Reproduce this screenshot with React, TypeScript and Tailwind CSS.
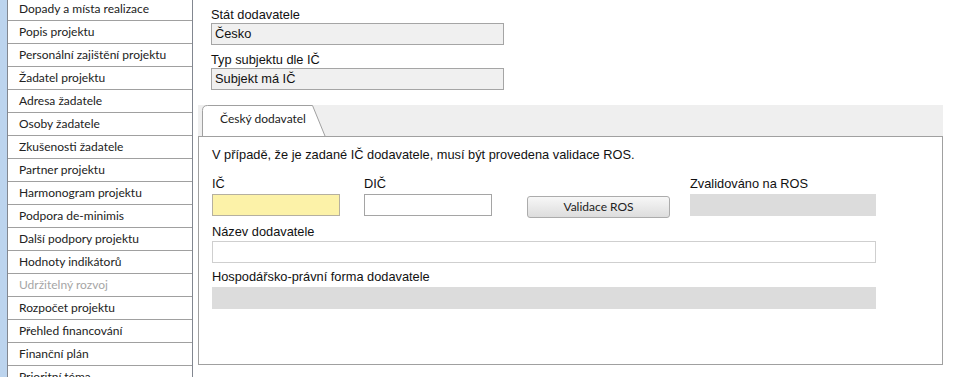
const NAV = [
  { label: 'Dopady a místa realizace' },
  { label: 'Popis projektu' },
  { label: 'Personální zajištění projektu' },
  { label: 'Žadatel projektu' },
  { label: 'Adresa žadatele' },
  { label: 'Osoby žadatele' },
  { label: 'Zkušenosti žadatele' },
  { label: 'Partner projektu' },
  { label: 'Harmonogram projektu' },
  { label: 'Podpora de-minimis' },
  { label: 'Další podpory projektu' },
  { label: 'Hodnoty indikátorů' },
  { label: 'Udržitelný rozvoj', disabled: true },
  { label: 'Rozpočet projektu' },
  { label: 'Přehled financování' },
  { label: 'Finanční plán' },
  { label: 'Prioritní téma' },
];

const uiFont = "font-['Lato','Noto_Sans',sans-serif]";
const formFont = "font-['Liberation_Sans',Arial,sans-serif]";

function Sidebar() {
  return (
    <div className="flex h-[377px] shrink-0 overflow-hidden">
      <div className="w-[7px] bg-[#bcd4ee]" />
      <div className="w-[186px] border-x border-[#828790] bg-white">
        <div className="-mt-[2px]">
          {NAV.map(item => (
            <div
              key={item.label}
              className={`h-[23px] border-b border-[#a0a0a0] pl-[11px] text-[12px] leading-[22px] ${uiFont} ${
                item.disabled ? 'text-[#a6a6a6]' : 'text-[#222]'
              }`}
            >
              {item.label}
            </div>
          ))}
        </div>
      </div>
    </div>
  );
}

function Label({ children }: { children: React.ReactNode }) {
  return <div className="h-[16px] text-[12.8px] leading-[16px] text-[#111]">{children}</div>;
}

function Tab({ title }: { title: string }) {
  return (
    <div className="relative ml-[4px] h-[31px] w-[124px]">
      <svg className="absolute inset-0" width="124" height="31" viewBox="0 0 124 31">
        <path d="M0.5 31 V5.5 Q0.5 0.5 5.5 0.5 H110.5 L123 31" fill="#fff" stroke="#a0a0a0" />
      </svg>
      <span className={`relative block pl-[18px] pt-[6px] text-[12px] leading-[16px] text-[#222] ${uiFont}`}>
        {title}
      </span>
    </div>
  );
}

export default function App() {
  return (
    <div className={`flex h-[377px] w-[962px] overflow-hidden bg-white ${formFont}`}>
      <Sidebar />
      <div className="ml-[5px] w-[745px]">
        {/* Header fields */}
        <div className="pl-[13px] pt-[7px]">
          <div className="h-[15px] text-[12.8px] leading-[15px] text-[#111]">Stát dodavatele</div>
          <div className="mt-[1px] h-[22px] w-[293px] border border-[#a5a5a5] bg-[#f0f0f0] pl-[3px] text-[12.8px] leading-[20px] text-[#111]">
            Česko
          </div>
          <div className="mt-[7px] h-[15px] text-[12.8px] leading-[15px] text-[#111]">Typ subjektu dle IČ</div>
          <div className="mt-[1px] h-[22px] w-[293px] border border-[#a5a5a5] bg-[#f0f0f0] pl-[3px] text-[12.8px] leading-[20px] text-[#111]">
            Subjekt má IČ
          </div>
        </div>

        {/* Tab strip */}
        <div className="mt-[15px] flex h-[31px] items-end bg-[#efefef]">
          <Tab title="Český dodavatel" />
        </div>

        {/* Tab panel */}
        <div className="h-[229px] border border-[#a0a0a0] pl-[13px]">
          <p className="pt-[10px] text-[12.8px] leading-[16px] text-[#111]">
            V případě, že je zadané IČ dodavatele, musí být provedena validace ROS.
          </p>

          <div className="mt-[13px] flex">
            <div className="w-[128px]">
              <Label>IČ</Label>
              <div className="mt-[2px] h-[22px] border border-[#b5b0a0] bg-[#fcf2a8]" />
            </div>
            <div className="ml-[24px] w-[128px]">
              <Label>DIČ</Label>
              <div className="mt-[2px] h-[22px] border border-[#a5a5a5] bg-white" />
            </div>
            <div className="ml-[35px] w-[143px] pt-[18px]">
              <button
                className={`h-[22px] w-full rounded-[3px] border border-[#acacac] bg-gradient-to-b from-[#f7f7f7] to-[#dddddd] text-[12px] leading-[20px] text-[#222] ${uiFont}`}
              >
                Validace ROS
              </button>
            </div>
            <div className="ml-[20px] w-[186px]">
              <Label>Zvalidováno na ROS</Label>
              <div className="mt-[2px] h-[22px] bg-[#dcdcdc]" />
            </div>
          </div>

          <div className="mt-[6px] w-[664px]">
            <Label>Název dodavatele</Label>
            <div className="mt-[1px] h-[22px] border border-[#cfcfcf] bg-white" />
          </div>

          <div className="mt-[6px] w-[664px]">
            <Label>Hospodářsko-právní forma dodavatele</Label>
            <div className="mt-[2px] h-[22px] bg-[#dcdcdc]" />
          </div>
        </div>
      </div>
    </div>
  );
}
